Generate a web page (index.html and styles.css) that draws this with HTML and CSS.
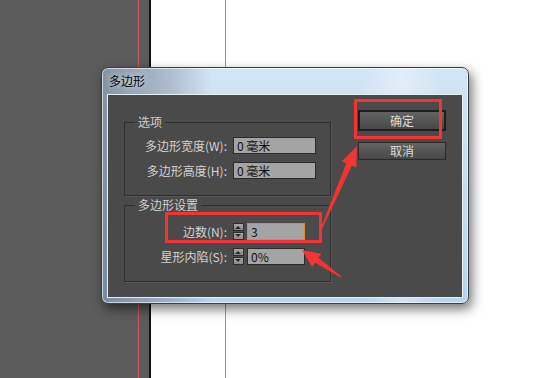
FILE: index.html
```html
<!DOCTYPE html>
<html lang="zh">
<head>
  <meta charset="UTF-8" />
  <title>多边形</title>
  <link rel="stylesheet" href="styles.css">
</head>
<body>
  <div class="desktop">
    <div class="panel"></div>
    <div class="guide-red"></div>
    <div class="panel-edge"></div>
    <div class="guide-black"></div>
    <div class="artboard">
      <div class="guide-blue"></div>
    </div>
  </div>

  <div class="dialog">
    <div class="titlebar">多边形</div>
    <div class="content">
      <div class="groups">
        <div class="group group-options">
          <span class="legend">选项</span>
          <div class="row">
            <label>多边形宽度(W):</label>
            <div class="field wide">0 毫米</div>
          </div>
          <div class="row">
            <label>多边形高度(H):</label>
            <div class="field wide">0 毫米</div>
          </div>
        </div>
        <div class="group group-settings">
          <span class="legend">多边形设置</span>
          <div class="row">
            <label>边数(N):</label>
            <div class="spinner"><span class="up"></span><span class="down"></span></div>
            <div class="field short focused">3</div>
          </div>
          <div class="row">
            <label>星形内陷(S):</label>
            <div class="spinner"><span class="up"></span><span class="down"></span></div>
            <div class="field short">0%</div>
          </div>
        </div>
      </div>
      <div class="actions">
        <button class="default">确定</button>
        <button>取消</button>
      </div>
    </div>
  </div>

  <svg class="marks" width="557" height="378" viewBox="0 0 557 378">
    <rect x="355.5" y="100.5" width="85" height="37" fill="none" stroke="#f23434" stroke-width="3"/>
    <rect x="166.5" y="213.5" width="154" height="28" fill="none" stroke="#f23434" stroke-width="3"/>
    <polygon fill="#f23434" points="318.5,233.8 346.3,163.2 341.8,161.2 357,146 356.4,167.6 351.9,165.6 319.5,234.2"/>
    <polygon fill="#f23434" points="341.3,276.6 318.5,257.8 321.4,253.7 302,250 312.2,266.9 315.1,262.8 340.7,277.4"/>
  </svg>
</body>
</html>
```

FILE: styles.css
```css
body {
  margin: 0;
  width: 557px;
  height: 378px;
  overflow: hidden;
  position: relative;
  font-family: "Noto Sans CJK SC", "Liberation Sans", sans-serif;
  font-size: 12px;
}
.desktop {
  display: flex;
  height: 378px;
}
.panel {
  width: 138px;
  background: #5c5c5c;
}
.guide-red {
  width: 1px;
  background: #c85a62;
}
.panel-edge {
  width: 10px;
  background: #5c5c5c;
}
.guide-black {
  width: 2px;
  background: #111;
}
.artboard {
  flex: 1;
  background: #fff;
  padding-left: 74px;
}
.guide-blue {
  width: 1px;
  height: 100%;
  background: #8c8cff;
}

.dialog {
  position: absolute;
  left: 101px;
  top: 67px;
  width: 356px;
  height: 230px;
  border: 1px solid #3a3f45;
  border-radius: 7px;
  background:
    linear-gradient(to right, rgba(70, 80, 92, 0.55) 0, rgba(70, 80, 92, 0.25) 70px, rgba(255, 255, 255, 0) 110px),
    linear-gradient(to right, rgba(255, 255, 255, 0) 260px, rgba(255, 255, 255, 0.35) 300px, rgba(255, 255, 255, 0) 340px),
    linear-gradient(#d3e5f6, #b6d3ef);
  box-shadow: 3px 5px 12px rgba(0, 0, 0, 0.55), inset 0 0 0 1px rgba(255, 255, 255, 0.6);
  display: flex;
  flex-direction: column;
  padding: 0 5px 5px 5px;
}
.titlebar {
  height: 26px;
  line-height: 26px;
  padding-left: 2px;
  color: #000;
  text-shadow: 0 0 6px rgba(255, 255, 255, 0.9);
}
.content {
  flex: 1;
  background: #4a4a4a;
  border: 1px solid #e6eef6;
  display: flex;
  align-items: flex-start;
  padding: 15px 0 0 16px;
}
.groups {
  width: 207px;
  margin-top: 12px;
}
.group {
  position: relative;
  border: 1px solid #2e2e2e;
  box-shadow: 1px 1px 0 #575757;
  display: flex;
  flex-direction: column;
  gap: 8px;
}
.group-options {
  padding: 14px 0 16px;
}
.group-settings {
  margin-top: 9px;
  padding: 17px 0 16px;
}
.legend {
  position: absolute;
  left: 10px;
  top: -8px;
  padding: 0 3px;
  line-height: 14px;
  background: #4a4a4a;
  color: #cfcfcf;
}
.row {
  display: flex;
  align-items: center;
  height: 17px;
}
.row label {
  width: 102px;
  text-align: right;
  color: #d2d2d2;
  line-height: 17px;
  margin-right: 6px;
}
.field {
  height: 15px;
  line-height: 15px;
  border: 1px solid #2a2a2a;
  background: #a4a4a4;
  color: #111;
  padding-left: 3px;
  box-sizing: content-box;
}
.field.wide {
  width: 78px;
}
.field.short {
  width: 53px;
}
.field.focused {
  border-color: #e08a2a;
}
.spinner {
  width: 11px;
  height: 17px;
  margin-right: 3px;
  display: flex;
  flex-direction: column;
  gap: 1px;
}
.spinner span {
  flex: 1;
  border: 1px solid #2e2e2e;
  background: linear-gradient(#a8a8a8, #8a8a8a);
  position: relative;
}
.spinner span::after {
  content: "";
  position: absolute;
  left: 1px;
  top: 2px;
  border-left: 3.5px solid transparent;
  border-right: 3.5px solid transparent;
}
.spinner .up::after {
  border-bottom: 3px solid #2a2a2a;
}
.spinner .down::after {
  top: 1px;
  border-top: 3px solid #2a2a2a;
}

.actions {
  margin-left: 27px;
  width: 88px;
  display: flex;
  flex-direction: column;
  gap: 11px;
}
button {
  font-family: inherit;
  font-size: 12px;
  height: 18px;
  padding: 0;
  line-height: 16px;
  border: 1px solid #2a2a2a;
  background: linear-gradient(#636363, #474747);
  color: #dcdcdc;
  cursor: pointer;
}
button.default {
  height: 21px;
  border: 2px solid #1e1e1e;
  line-height: 17px;
}

.marks {
  position: absolute;
  left: 0;
  top: 0;
}
```
